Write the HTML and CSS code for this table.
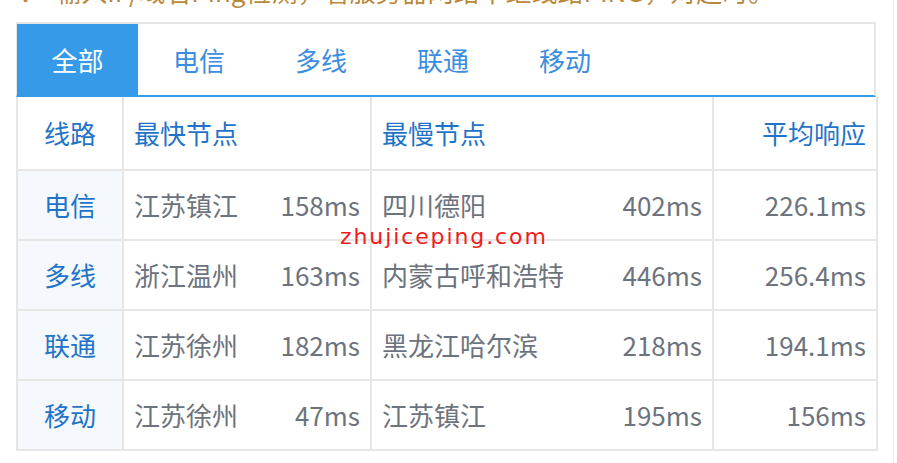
FILE: index.html
```html
<!DOCTYPE html>
<html lang="zh-CN">
<head>
    <meta charset="UTF-8">
    <meta name="viewport" content="width=device-width, initial-scale=1.0">
    <title>Ping检测</title>
    <link rel="stylesheet" href="styles.css">
</head>
<body>
    <div class="page">
        <p class="intro">✓&nbsp;&nbsp;&nbsp;输入IP/域名Ping检测，看服务器网络中继线路PING，对超时。</p>
        <div class="tabs">
            <div class="tab active">全部</div>
            <div class="tab">电信</div>
            <div class="tab">多线</div>
            <div class="tab">联通</div>
            <div class="tab">移动</div>
        </div>
        <div class="result">
            <table class="ping">
                <colgroup>
                    <col class="c-line">
                    <col class="c-fast">
                    <col class="c-slow">
                    <col class="c-avg">
                </colgroup>
                <thead>
                    <tr>
                        <th class="line">线路</th>
                        <th>最快节点</th>
                        <th>最慢节点</th>
                        <th class="avg">平均响应</th>
                    </tr>
                </thead>
                <tbody>
                    <tr>
                        <td class="line">电信</td>
                        <td><div class="node"><span>江苏镇江</span><span>158ms</span></div></td>
                        <td><div class="node"><span>四川德阳</span><span>402ms</span></div></td>
                        <td class="avg">226.1ms</td>
                    </tr>
                    <tr>
                        <td class="line">多线</td>
                        <td><div class="node"><span>浙江温州</span><span>163ms</span></div></td>
                        <td><div class="node"><span>内蒙古呼和浩特</span><span>446ms</span></div></td>
                        <td class="avg">256.4ms</td>
                    </tr>
                    <tr>
                        <td class="line">联通</td>
                        <td><div class="node"><span>江苏徐州</span><span>182ms</span></div></td>
                        <td><div class="node"><span>黑龙江哈尔滨</span><span>218ms</span></div></td>
                        <td class="avg">194.1ms</td>
                    </tr>
                    <tr>
                        <td class="line">移动</td>
                        <td><div class="node"><span>江苏徐州</span><span>47ms</span></div></td>
                        <td><div class="node"><span>江苏镇江</span><span>195ms</span></div></td>
                        <td class="avg">156ms</td>
                    </tr>
                </tbody>
            </table>
            <span class="mark">zhujiceping.com</span>
        </div>
    </div>
</body>
</html>
```

FILE: styles.css
```css
body {
    margin: 0;
    padding: 0;
    background-color: #ffffff;
    font-family: "Noto Sans CJK SC", "Noto Sans", sans-serif;
}

.page {
    width: 860px;
    padding: 0 17px 0 16px;
    border-right: 1px solid #e8eef4;
    min-height: 463px;
    overflow: hidden;
}

.intro {
    margin: -22px 0 18px 4px;
    height: 26px;
    font-size: 26px;
    line-height: 26px;
    color: #b8883c;
    white-space: nowrap;
}

.tabs {
    display: flex;
    height: 71px;
    border: 2px solid #e6e6e6;
    border-bottom: 2px solid #359be8;
    border-left-width: 1px;
}

.tab {
    width: 122px;
    text-align: center;
    font-size: 26px;
    line-height: 71px;
    color: #3a8de0;
}

.tab.active {
    width: 121px;
    background-color: #359be8;
    color: #ffffff;
}

.result {
    position: relative;
}

.ping {
    width: 860px;
    table-layout: fixed;
    border-collapse: collapse;
    font-size: 26px;
}

.c-line { width: 106px; }
.c-fast { width: 248px; }
.c-slow { width: 342px; }
.c-avg { width: 164px; }

.ping th,
.ping td {
    border: 2px solid #e6e6e6;
    padding: 0 10px;
    line-height: 36px;
}

.ping thead tr:first-child th {
    border-top: none;
}

.ping th {
    height: 72px;
    font-weight: normal;
    text-align: left;
    color: #1f74c9;
}

.ping td {
    height: 68px;
    color: #6d737d;
}

.ping .line {
    text-align: center;
    color: #1f74c9;
}

.ping td.line {
    background-color: #f5f9fd;
}

.ping .avg {
    text-align: right;
}

.node {
    display: flex;
    justify-content: space-between;
}

.mark {
    position: absolute;
    left: 324px;
    top: 127px;
    font-family: "DejaVu Sans", sans-serif;
    font-size: 22px;
    letter-spacing: 1.9px;
    color: #f01b1b;
}
```
